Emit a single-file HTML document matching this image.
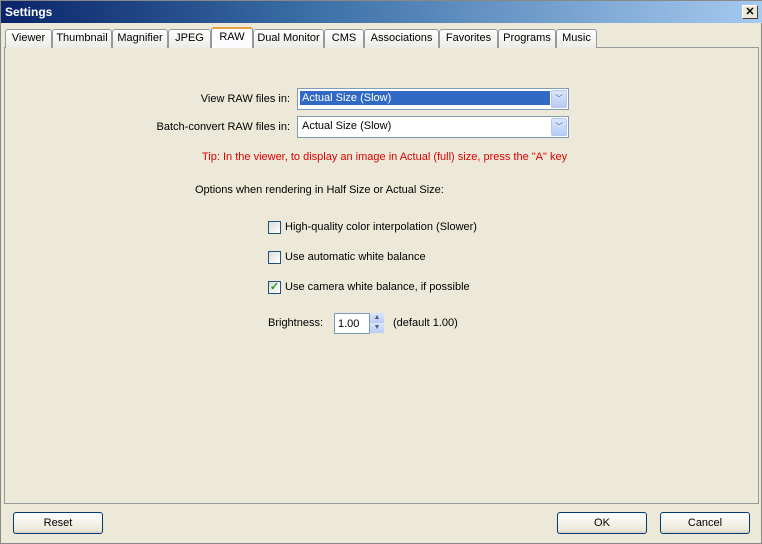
<!DOCTYPE html>
<html><head><style>
*{margin:0;padding:0;box-sizing:border-box}
body{width:762px;height:544px;background:#ece9d8;font:11px "Liberation Sans",sans-serif;color:#000;position:relative;overflow:hidden;border:1px solid #888}
.a{position:absolute}
.title{left:0;top:0;width:762px;height:22px;background:linear-gradient(90deg,#0a246a,#3a6ea5 40%,#a6caf0);color:#fff;font-weight:bold;font-size:12px;padding:4px 0 0 4px}
.close{left:741px;top:4px;width:16px;height:14px;background:#ece9d8;border:1px solid;border-color:#fff #404040 #404040 #fff;color:#000;font-size:11px;font-weight:bold;text-align:center;line-height:12px}
.tab{top:28px;height:19px;border:1px solid #919b9c;border-bottom:none;border-radius:3px 3px 0 0;background:linear-gradient(#fefefe,#ecebe6);text-align:center;line-height:17px}
.sel{top:26px;height:21px;background:#fcfcfe;border-top:2px solid #e6a23a;z-index:2;line-height:17px}
.panel{left:3px;top:46px;width:755px;height:457px;border:1px solid #919b9c;background:#ece9d8}
.lbl{text-align:right;width:200px}
.combo{width:272px;height:22px;border:1px solid #7f9db9;background:#fff;padding:3px 0 0 4px}
.dd{position:absolute;right:1px;top:1px;width:16px;height:18px;background:linear-gradient(#dbe6fd,#b8ccf5);border:1px solid #b6c8f0;border-radius:2px;color:#4d6185;font-size:8px;text-align:center;line-height:16px}
.cb{width:13px;height:13px;border:1px solid #1c5180;background:linear-gradient(135deg,#dcdcd7,#fff)}
.btn{width:90px;height:22px;border:1px solid #003c74;border-radius:3px;background:linear-gradient(#fff,#ece9d8 85%,#d6d0c5);text-align:center;line-height:20px}
</style></head><body>
<div class="a title">Settings</div>
<div class="a close">✕</div>
<div class="a panel"></div>
<div class="a tab" style="left:4px;width:47px">Viewer</div>
<div class="a tab" style="left:51px;width:60px">Thumbnail</div>
<div class="a tab" style="left:111px;width:56px">Magnifier</div>
<div class="a tab" style="left:167px;width:43px">JPEG</div>
<div class="a tab sel" style="left:210px;width:42px">RAW</div>
<div class="a tab" style="left:252px;width:71px">Dual Monitor</div>
<div class="a tab" style="left:323px;width:40px">CMS</div>
<div class="a tab" style="left:363px;width:75px">Associations</div>
<div class="a tab" style="left:438px;width:59px">Favorites</div>
<div class="a tab" style="left:497px;width:58px">Programs</div>
<div class="a tab" style="left:555px;width:41px">Music</div>

<div class="a lbl" style="left:89px;top:92px">View RAW files in:</div>
<div class="a combo" style="left:296px;top:87px"><span style="background:#316ac5;color:#fff;display:inline-block;width:250px;margin:-1px 0 0 -2px;padding:1px 2px">Actual Size (Slow)</span><div class="dd">﹀</div></div>
<div class="a lbl" style="left:89px;top:120px">Batch-convert RAW files in:</div>
<div class="a combo" style="left:296px;top:115px">Actual Size (Slow)<div class="dd">﹀</div></div>
<div class="a" style="left:201px;top:150px;color:#e00000">Tip: In the viewer, to display an image in Actual (full) size, press the "A" key</div>
<div class="a" style="left:194px;top:183px">Options when rendering in Half Size or Actual Size:</div>
<div class="a cb" style="left:267px;top:220px"></div><div class="a" style="left:284px;top:220px">High-quality color interpolation (Slower)</div>
<div class="a cb" style="left:267px;top:250px"></div><div class="a" style="left:284px;top:250px">Use automatic white balance</div>
<div class="a cb" style="left:267px;top:280px;color:#21a121;font-size:11px;line-height:10px;text-align:center;font-weight:bold">✓</div><div class="a" style="left:284px;top:280px">Use camera white balance, if possible</div>
<div class="a" style="left:267px;top:316px">Brightness:</div>
<div class="a" style="left:333px;top:312px;width:36px;height:21px;border:1px solid #7f9db9;background:#fff;padding:4px 0 0 3px">1.00</div>
<div class="a" style="left:369px;top:312px;width:14px;height:10px;background:linear-gradient(#dbe6fd,#b8ccf5);font-size:7px;color:#4d6185;text-align:center;line-height:10px">▲</div>
<div class="a" style="left:369px;top:322px;width:14px;height:10px;background:linear-gradient(#dbe6fd,#b8ccf5);font-size:7px;color:#4d6185;text-align:center;line-height:10px">▼</div>
<div class="a" style="left:392px;top:316px">(default 1.00)</div>

<div class="a btn" style="left:12px;top:511px">Reset</div>
<div class="a btn" style="left:556px;top:511px">OK</div>
<div class="a btn" style="left:659px;top:511px">Cancel</div>
</body></html>
